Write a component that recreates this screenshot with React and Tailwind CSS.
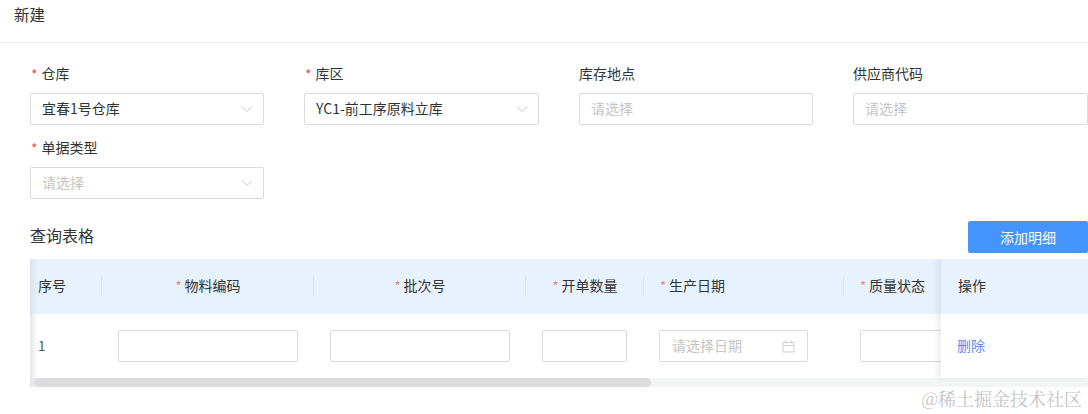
import React from "react";

const FONT = "font-['Noto_Sans_CJK_SC','Noto_Sans',sans-serif]";

function Chevron() {
  return (
    <svg width="12" height="8" viewBox="0 0 12 8" fill="none" className="shrink-0">
      <path d="M1 1.5 L6 6.5 L11 1.5" stroke="#c4c6cc" strokeWidth="1" />
    </svg>
  );
}

function Calendar() {
  return (
    <svg width="13" height="13" viewBox="0 0 13 13" fill="none" className="shrink-0">
      <path d="M1 2.5H12V12H1V2.5ZM1 5.5H12M3.5 0.5V3M9.5 0.5V3" stroke="#cfcfcf" strokeWidth="1" />
    </svg>
  );
}

function Field({ label, required, value, placeholder, select, width }) {
  return (
    <div className={`${width} shrink-0 flex flex-col`}>
      <div className="h-[19px] flex items-center text-[14px] leading-[19px] text-[#333] whitespace-nowrap">
        {required && <span className="text-[#e0554e] mr-[4px] ml-[1px] text-[14px] leading-[14px]">*</span>}
        {label}
      </div>
      <div className="mt-[10px] h-8 border border-[#d9d9d9] rounded-[2px] bg-white flex items-center justify-between pl-[11px] pr-[10px]">
        <span className={`text-[14px] leading-[28px] h-[30px] whitespace-nowrap ${value ? "text-[#333]" : "text-[#c4c4c4]"}`}>
          {value || placeholder}
        </span>
        {select && <Chevron />}
      </div>
    </div>
  );
}

function HeadCell({ width, label, required, center, divider, pl }) {
  return (
    <div className={`${width} shrink-0 h-full flex items-center relative pb-[2px] ${center ? "justify-center" : ""} ${pl || ""}`}>
      <span className="text-[14px] text-[#333] whitespace-nowrap">
        {required && <span className="text-[#e8837e] mr-[3px] text-[13px]">*</span>}
        {label}
      </span>
      {divider && <span className="absolute right-0 top-[17px] h-[20px] w-px bg-[#d8e3ee]" />}
    </div>
  );
}

function BoxCell({ width, boxWidth, pl, children }) {
  return (
    <div className={`${width} shrink-0 h-full flex items-center ${pl || "pl-4"}`}>
      <div className={`${boxWidth} shrink-0 h-8 border border-[#d9d9d9] rounded-[2px] bg-white flex items-center justify-between pl-3 pr-3`}>
        {children}
      </div>
    </div>
  );
}

export default function App() {
  return (
    <div className={`${FONT} w-[1088px] h-[414px] bg-white overflow-hidden relative`}>
      <div className="h-[43px] border-b border-[#ececec] pl-[14px] pt-[2px] text-[15.5px] leading-[24px] text-[#333]">新建</div>

      <div className="pl-[30px] pt-[21px]">
        <div className="flex">
          <Field width="w-[234px]" label="仓库" required value="宜春1号仓库" select />
          <Field width="w-[235px] ml-[40px]" label="库区" required value="YC1-前工序原料立库" select />
          <Field width="w-[234px] ml-[40px]" label="库存地点" placeholder="请选择" />
          <Field width="w-[235px] ml-[40px]" label="供应商代码" placeholder="请选择" />
        </div>
        <div className="flex mt-[13px]">
          <Field width="w-[234px]" label="单据类型" required placeholder="请选择" select />
        </div>

        <div className="mt-[22px] h-[32px] flex items-start justify-between">
          <span className="text-[16px] text-[#333] leading-[28px]">查询表格</span>
          <button className="w-[120px] h-8 rounded-[2px] bg-[#4494fb] text-white text-[14px] leading-[32px]">添加明细</button>
        </div>

        <div className="mt-[6px] w-[1058px] relative overflow-hidden">
          <div className="h-[55px] bg-[#e8f2fd] flex">
            <HeadCell width="w-[72px]" label="序号" divider pl="pl-2" />
            <HeadCell width="w-[212px]" label="物料编码" required center divider />
            <HeadCell width="w-[212px]" label="批次号" required center divider />
            <HeadCell width="w-[118px]" label="开单数量" required center divider />
            <HeadCell width="w-[200px]" label="生产日期" required divider pl="pl-4" />
            <HeadCell width="w-[212px]" label="质量状态" required pl="pl-4" />
          </div>
          <div className="h-[64px] bg-white flex">
            <div className="w-[72px] shrink-0 h-full flex items-center pl-2 pb-[2px] text-[13.5px] text-[#4a5a4a]">1</div>
            <BoxCell width="w-[212px]" boxWidth="w-[180px]" />
            <BoxCell width="w-[212px]" boxWidth="w-[180px]" />
            <BoxCell width="w-[117px]" boxWidth="w-[85px]" />
            <BoxCell width="w-[201px]" boxWidth="w-[149px]">
              <span className="text-[14px] leading-[28px] h-[30px] text-[#c4c4c4] whitespace-nowrap">请选择日期</span>
              <Calendar />
            </BoxCell>
            <BoxCell width="w-[212px]" boxWidth="w-[180px]" />
          </div>
          <div className="h-[9px] bg-[#f3f4f4] flex items-center pl-1">
            <div className="w-[617px] h-[9px] rounded-full bg-[#dcdcdc]" />
          </div>

          {/* left fixed-edge shade */}
          <div className="absolute left-0 top-0 w-[8px] h-[128px] bg-gradient-to-r from-[#d6dbe2]/70 to-transparent pointer-events-none" />

          {/* right fixed column */}
          <div className="absolute right-0 top-0 w-[147px] h-[119px] bg-white shadow-[-4px_0_6px_rgba(0,0,0,0.07)]">
            <div className="h-[55px] bg-[#e8f2fd] flex items-center pl-[17px] pb-[2px] text-[14px] text-[#333]">操作</div>
            <div className="h-[64px] flex items-center pl-4 pb-[2px] text-[14px] text-[#5b8def]">删除</div>
          </div>
        </div>
      </div>

      {/* watermark */}
      <div className="absolute right-[6px] top-[386px] text-[18px] leading-[24px] text-[#c4c4c4] font-['Noto_Serif_CJK_SC','Noto_Sans_CJK_SC',serif] whitespace-nowrap">@稀土掘金技术社区</div>
    </div>
  );
}
